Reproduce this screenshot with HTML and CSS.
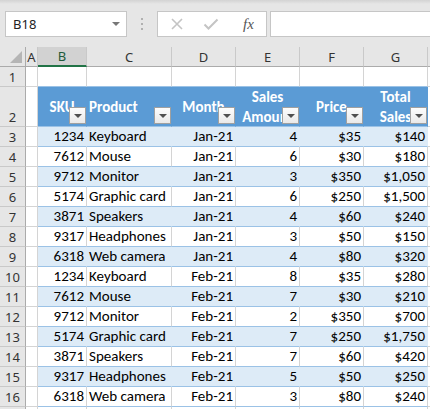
FILE: index.html
```html
<!DOCTYPE html>
<html lang="en">
<head>
    <meta charset="UTF-8">
    <title>Sales - Sheet1</title>
    <link rel="stylesheet" href="styles.css">
</head>
<body>
    <div class="topbar">
        <div class="namebox">
            <span>B18</span>
            <span class="nb-arrow"></span>
        </div>
        <div class="grip"><i></i><i></i><i></i></div>
        <div class="fxbox">
            <svg class="fx-icon" width="14" height="14" viewBox="0 0 14 14"><path d="M2 2 L12 12 M12 2 L2 12" stroke="#c4c4c4" stroke-width="1.6" fill="none"/></svg>
            <svg class="fx-icon" width="16" height="14" viewBox="0 0 16 14"><path d="M1.5 7.5 L5.5 11.5 L14.5 2.5" stroke="#c4c4c4" stroke-width="2" fill="none"/></svg>
            <span class="fx">fx</span>
        </div>
        <div class="formula"></div>
    </div>

    <div class="sheet" id="sheet">
        <div class="ch corner"></div>
        <div class="ch">A</div>
        <div class="ch sel">B</div>
        <div class="ch">C</div>
        <div class="ch">D</div>
        <div class="ch">E</div>
        <div class="ch">F</div>
        <div class="ch">G</div>
        <div class="ch"></div>

        <div class="rh">1</div>
        <div class="c"></div>
        <div class="c tt"></div>
        <div class="c tt"></div>
        <div class="c tt"></div>
        <div class="c tt"></div>
        <div class="c tt"></div>
        <div class="c tt"></div>
        <div class="c"></div>

        <div class="rh">2</div>
        <div class="c"></div>
        <div class="c th">SKU<span class="filter"></span></div>
        <div class="c th left">Product<span class="filter"></span></div>
        <div class="c th">Month<span class="filter"></span></div>
        <div class="c th">Sales Amount<span class="filter"></span></div>
        <div class="c th">Price<span class="filter"></span></div>
        <div class="c th">Total Sales<span class="filter"></span></div>
        <div class="c"></div>
    </div>

    <script>
        const rows = [
            [1234, "Keyboard", "Jan-21", 4, "$35", "$140"],
            [7612, "Mouse", "Jan-21", 6, "$30", "$180"],
            [9712, "Monitor", "Jan-21", 3, "$350", "$1,050"],
            [5174, "Graphic card", "Jan-21", 6, "$250", "$1,500"],
            [3871, "Speakers", "Jan-21", 4, "$60", "$240"],
            [9317, "Headphones", "Jan-21", 3, "$50", "$150"],
            [6318, "Web camera", "Jan-21", 4, "$80", "$320"],
            [1234, "Keyboard", "Feb-21", 8, "$35", "$280"],
            [7612, "Mouse", "Feb-21", 7, "$30", "$210"],
            [9712, "Monitor", "Feb-21", 2, "$350", "$700"],
            [5174, "Graphic card", "Feb-21", 7, "$250", "$1,750"],
            [3871, "Speakers", "Feb-21", 7, "$60", "$420"],
            [9317, "Headphones", "Feb-21", 5, "$50", "$250"],
            [6318, "Web camera", "Feb-21", 3, "$80", "$240"]
        ];

        const sheet = document.getElementById("sheet");
        let html = "";
        rows.forEach(function (r, i) {
            const band = i % 2 === 0 ? " band" : "";
            html += '<div class="rh">' + (i + 3) + '</div>';
            html += '<div class="c"></div>';
            html += '<div class="c tt num' + band + '">' + r[0] + '</div>';
            html += '<div class="c tt' + band + '">' + r[1] + '</div>';
            for (let k = 2; k < 6; k++) {
                html += '<div class="c tt num' + band + '">' + r[k] + '</div>';
            }
            html += '<div class="c"></div>';
        });
        // next row, only its top edge shows
        html += '<div class="rh"></div>';
        for (let k = 0; k < 8; k++) html += '<div class="c"></div>';
        sheet.insertAdjacentHTML("beforeend", html);
    </script>
</body>
</html>
```

FILE: styles.css
```css
body {
    margin: 0;
    background: #fff;
    font-family: "Carlito", Calibri, Lato, sans-serif;
    overflow: hidden;
}
.topbar {
    height: 47px;
    box-sizing: border-box;
    padding-top: 11px;
    display: flex;
    align-items: flex-start;
    background: linear-gradient(#d3d3d3 0, #e6e6e6 4px);
}
.namebox {
    margin-left: 5px;
    width: 122px;
    height: 26px;
    box-sizing: border-box;
    border: 1px solid #c6c6c6;
    background: #fff;
    display: flex;
    align-items: center;
    justify-content: space-between;
    padding: 0 6px 0 7px;
    font: 13px "Noto Sans", sans-serif;
    color: #222;
}
.nb-arrow {
    width: 0;
    height: 0;
    border-left: 4px solid transparent;
    border-right: 4px solid transparent;
    border-top: 4px solid #777;
}
.grip {
    width: 30px;
    height: 26px;
    display: flex;
    flex-direction: column;
    align-items: center;
    justify-content: center;
    gap: 3px;
}
.grip i {
    width: 2px;
    height: 2px;
    background: #b0b0b0;
}
.fxbox {
    width: 110px;
    height: 26px;
    box-sizing: border-box;
    border: 1px solid #c6c6c6;
    background: #fff;
    display: flex;
    align-items: center;
    padding-left: 12px;
    gap: 19px;
}
.fx {
    font: italic 15px "Liberation Serif", serif;
    color: #555;
    margin-left: 5px;
}
.formula {
    flex: 1;
    height: 26px;
    margin-left: 3px;
    box-sizing: border-box;
    border: 1px solid #c6c6c6;
    border-right: none;
    background: #fff;
}

.sheet {
    display: grid;
    grid-template-columns: 26px 12px 49px 85px 64px 64px 64px 64px 1fr;
    grid-template-rows: 20px 20px 40px repeat(15, 20px);
}
.sheet > div {
    box-sizing: border-box;
    overflow: hidden;
    white-space: nowrap;
}
.ch {
    background: #e6e6e6;
    border-right: 1px solid #c9c9c9;
    border-bottom: 1px solid #ababab;
    font: 13px "Noto Sans", sans-serif;
    color: #333;
    display: flex;
    align-items: center;
    justify-content: center;
}
.ch.sel {
    background: #d2d2d2;
    border-bottom: 2px solid #217346;
    color: #215a3a;
}
.corner {
    position: relative;
    border-right-color: #ababab;
}
.corner::after {
    content: "";
    position: absolute;
    right: 3px;
    bottom: 3px;
    border-left: 12px solid transparent;
    border-bottom: 12px solid #b5b5b5;
}
.rh {
    background: #e6e6e6;
    border-right: 1px solid #ababab;
    border-bottom: 1px solid #c9c9c9;
    font: 13px "Noto Sans", sans-serif;
    color: #333;
    display: flex;
    align-items: flex-end;
    justify-content: center;
    line-height: 18px;
}
.c {
    border-right: 1px solid #d4d4d4;
    border-bottom: 1px solid #d4d4d4;
    display: flex;
    align-items: flex-end;
    padding: 0 2px 1px;
    font-size: 15px;
    line-height: 18px;
    color: #000;
}
.tt {
    border-bottom-color: #9bc2e6;
}
.num {
    justify-content: flex-end;
}
.band {
    background: #ddebf7;
    border-right-color: #ddebf7;
}
.th {
    position: relative;
    background: #5b9bd5;
    border-right-color: #5b9bd5;
    border-bottom-color: #9bc2e6;
    color: #fff;
    font-weight: bold;
    white-space: normal !important;
    align-items: center;
    justify-content: center;
    text-align: center;
    line-height: 20px;
    padding: 0 1px;
}
.th.left {
    justify-content: flex-start;
    padding-left: 2px;
}
.filter {
    position: absolute;
    right: 0;
    bottom: 2px;
    width: 17px;
    height: 17px;
    box-sizing: border-box;
    border: 1px solid #a0a0a0;
    background: linear-gradient(#fdfdfd, #e9e9e9);
}
.filter::after {
    content: "";
    position: absolute;
    left: 4px;
    top: 6px;
    border-left: 4px solid transparent;
    border-right: 4px solid transparent;
    border-top: 4px solid #505050;
}
```
